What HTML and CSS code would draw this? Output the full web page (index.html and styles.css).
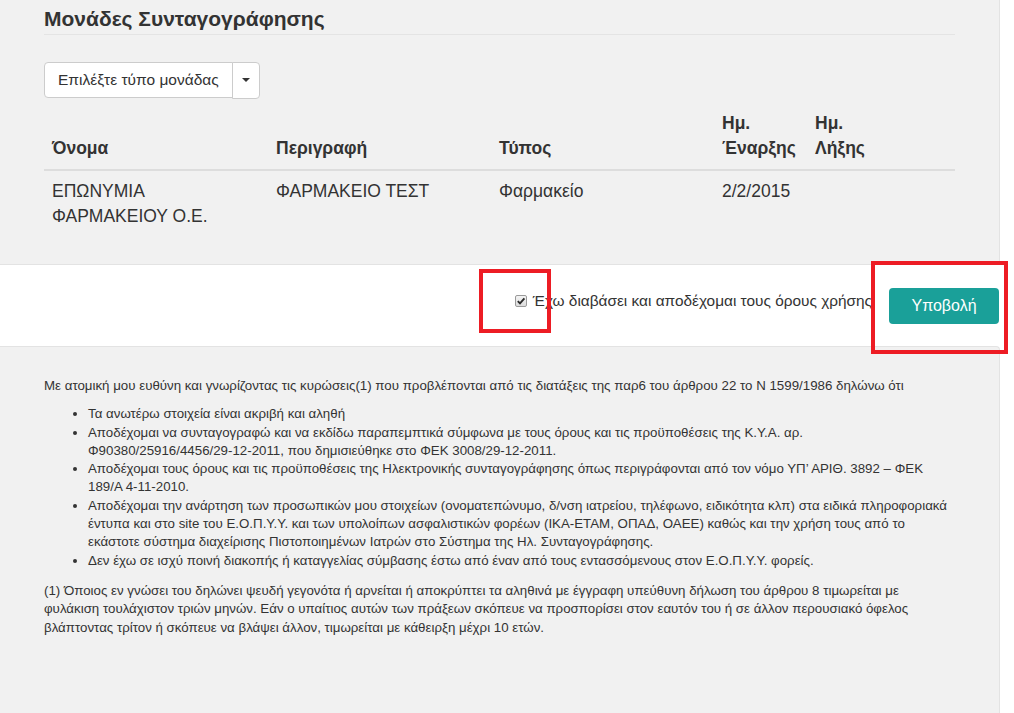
FILE: index.html
```html
<!DOCTYPE html>
<html lang="el">
<head>
<meta charset="utf-8">
<title>Μονάδες Συνταγογράφησης</title>
<link rel="stylesheet" href="styles.css">
</head>
<body>
<div class="page">
  <section class="well well-top">
    <h2 class="title">Μονάδες Συνταγογράφησης</h2>
    <div class="btn-group">
      <button class="btn-select" type="button">Επιλέξτε τύπο μονάδας</button>
      <button class="btn-caret" type="button"><span class="caret"></span></button>
    </div>
    <table class="units">
      <colgroup>
        <col class="w-name"><col class="w-desc"><col class="w-type"><col class="w-start"><col>
      </colgroup>
      <thead>
        <tr>
          <th>Όνομα</th>
          <th>Περιγραφή</th>
          <th>Τύπος</th>
          <th>Ημ.<br>Έναρξης</th>
          <th>Ημ.<br>Λήξης</th>
        </tr>
      </thead>
      <tbody>
        <tr>
          <td>ΕΠΩΝΥΜΙΑ ΦΑΡΜΑΚΕΙΟΥ Ο.Ε.</td>
          <td>ΦΑΡΜΑΚΕΙΟ ΤΕΣΤ</td>
          <td>Φαρμακείο</td>
          <td>2/2/2015</td>
          <td></td>
        </tr>
      </tbody>
    </table>
  </section>

  <div class="accept-bar">
    <label class="accept">
      <span class="check-box"><svg viewBox="0 0 10 10" width="10" height="10"><path d="M1.8 5.2 L4 7.4 L8.4 2.4" fill="none" stroke="#2b2b2b" stroke-width="1.9"/></svg></span>
      <span class="accept-text">Έχω διαβάσει και αποδέχομαι τους όρους χρήσης</span>
    </label>
    <button class="btn-submit" type="button">Υποβολή</button>
    <span class="mark mark-check"></span>
    <span class="mark mark-submit"></span>
  </div>

  <section class="well well-terms">
    <p>Με ατομική μου ευθύνη και γνωρίζοντας τις κυρώσεις(1) που προβλέπονται από τις διατάξεις της παρ6 του άρθρου 22 το Ν 1599/1986 δηλώνω ότι</p>
    <ul>
      <li>Τα ανωτέρω στοιχεία είναι ακριβή και αληθή</li>
      <li>Αποδέχομαι να συνταγογραφώ και να εκδίδω παραπεμπτικά σύμφωνα με τους όρους και τις προϋποθέσεις της Κ.Υ.Α. αρ. <span class="nowrap">Φ90380/25916/4456/29-12-2011,</span> που δημισιεύθηκε στο ΦΕΚ <span class="nowrap">3008/29-12-2011.</span></li>
      <li>Αποδέχομαι τους όρους και τις προϋποθέσεις της Ηλεκτρονικής συνταγογράφησης όπως περιγράφονται από τον νόμο ΥΠ’ ΑΡΙΘ. 3892 – ΦΕΚ <span class="nowrap">189/Α 4-11-2010.</span></li>
      <li>Αποδέχομαι την ανάρτηση των προσωπικών μου στοιχείων (ονοματεπώνυμο, δ/νση ιατρείου, τηλέφωνο, ειδικότητα κλπ) στα ειδικά πληροφοριακά έντυπα και στο site του Ε.Ο.Π.Υ.Υ. και των υπολοίπων ασφαλιστικών φορέων (ΙΚΑ-ΕΤΑΜ, ΟΠΑΔ, ΟΑΕΕ) καθώς και την χρήση τους από το εκάστοτε σύστημα διαχείρισης Πιστοποιημένων Ιατρών στο Σύστημα της Ηλ. Συνταγογράφησης.</li>
      <li>Δεν έχω σε ισχύ ποινή διακοπής ή καταγγελίας σύμβασης έστω από έναν από τους εντασσόμενους στον Ε.Ο.Π.Υ.Υ. φορείς.</li>
    </ul>
    <p>(1) Όποιος εν γνώσει του δηλώνει ψευδή γεγονότα ή αρνείται ή αποκρύπτει τα αληθινά με έγγραφη υπεύθυνη δήλωση του άρθρου 8 τιμωρείται με φυλάκιση τουλάχιστον τριών μηνών. Εάν ο υπαίτιος αυτών των πράξεων σκόπευε να προσπορίσει στον εαυτόν του ή σε άλλον περουσιακό όφελος βλάπτοντας τρίτον ή σκόπευε να βλάψει άλλον, τιμωρείται με κάθειρξη μέχρι 10 ετών.</p>
  </section>
</div>
</body>
</html>
```

FILE: styles.css
```css
* { box-sizing: border-box; }

body {
  margin: 0;
  background: #ffffff;
  color: #333333;
  font-family: "Liberation Sans", Arial, sans-serif;
}

.page {
  width: 1000px;
}

.well {
  background: #f1f1f1;
  border: 1px solid #e3e3e3;
  border-left: none;
}

.well-top {
  border-top: none;
  border-radius: 0 0 4px 0;
  padding: 7px 44px 27px 44px;
}

.title {
  margin: 0;
  font-size: 21px;
  line-height: 24px;
  font-weight: bold;
  color: #333333;
  padding-bottom: 3px;
  border-bottom: 1px solid #e4e4e4;
}

.btn-group {
  display: flex;
  margin-top: 27px;
}

.btn-select,
.btn-caret {
  background: #ffffff;
  border: 1px solid #cccccc;
  color: #333333;
  font-family: inherit;
  font-size: 15.5px;
  line-height: 18px;
  padding: 8px 13px;
  height: 36px;
}

.btn-select {
  border-radius: 4px 0 0 4px;
}

.btn-caret {
  width: 28px;
  height: 37px;
  margin-left: -1px;
  padding: 0;
  border-radius: 0 4px 4px 0;
  display: flex;
  align-items: center;
  justify-content: center;
}

.caret {
  width: 0;
  height: 0;
  border-top: 4px solid #333333;
  border-left: 4px solid transparent;
  border-right: 4px solid transparent;
  margin-top: -1px;
}

.units {
  width: 911px;
  margin-top: 4px;
  border-collapse: collapse;
  table-layout: fixed;
  font-size: 17.5px;
  line-height: 25px;
}

.w-name { width: 224px; }
.w-desc { width: 223px; }
.w-type { width: 223px; }
.w-start { width: 93px; }

.units th,
.units td {
  padding: 8px;
  text-align: left;
}

.units th {
  vertical-align: bottom;
  font-weight: bold;
  border-bottom: 2px solid #dddddd;
}

.units td {
  vertical-align: top;
}

.accept-bar {
  position: relative;
  height: 81px;
  display: flex;
  justify-content: flex-end;
  align-items: center;
  padding-right: 1px;
}

.accept {
  display: flex;
  align-items: center;
  font-size: 15.4px;
  line-height: 20px;
  margin-right: 17px;
  margin-bottom: 10px;
}

.check-box {
  width: 12px;
  height: 12px;
  border: 1px solid #9a9a9a;
  border-radius: 2px;
  background: linear-gradient(#f4f4f4, #dcdcdc);
  display: flex;
  align-items: center;
  justify-content: center;
  margin-right: 6px;
}

.check-box svg {
  display: block;
}

.btn-submit {
  width: 110px;
  height: 36px;
  background: #1aa099;
  color: #ffffff;
  border: none;
  border-radius: 4px;
  font-family: inherit;
  font-size: 16px;
}

.mark {
  position: absolute;
  border: 4px solid #ed1c24;
}

.mark-check {
  left: 479px;
  top: 4px;
  width: 72px;
  height: 64px;
}

.mark-submit {
  left: 871px;
  top: -4px;
  width: 137px;
  height: 93px;
}

.well-terms {
  border-bottom: none;
  border-radius: 0 4px 0 0;
  padding: 30px 44px 40px 44px;
  min-height: 370px;
  font-size: 13.3px;
  line-height: 18.3px;
}

.well-terms p {
  margin: 0 0 10px 0;
}

.well-terms ul {
  margin: 0 0 12px 0;
  padding-left: 44px;
}

.nowrap {
  white-space: nowrap;
}
```
